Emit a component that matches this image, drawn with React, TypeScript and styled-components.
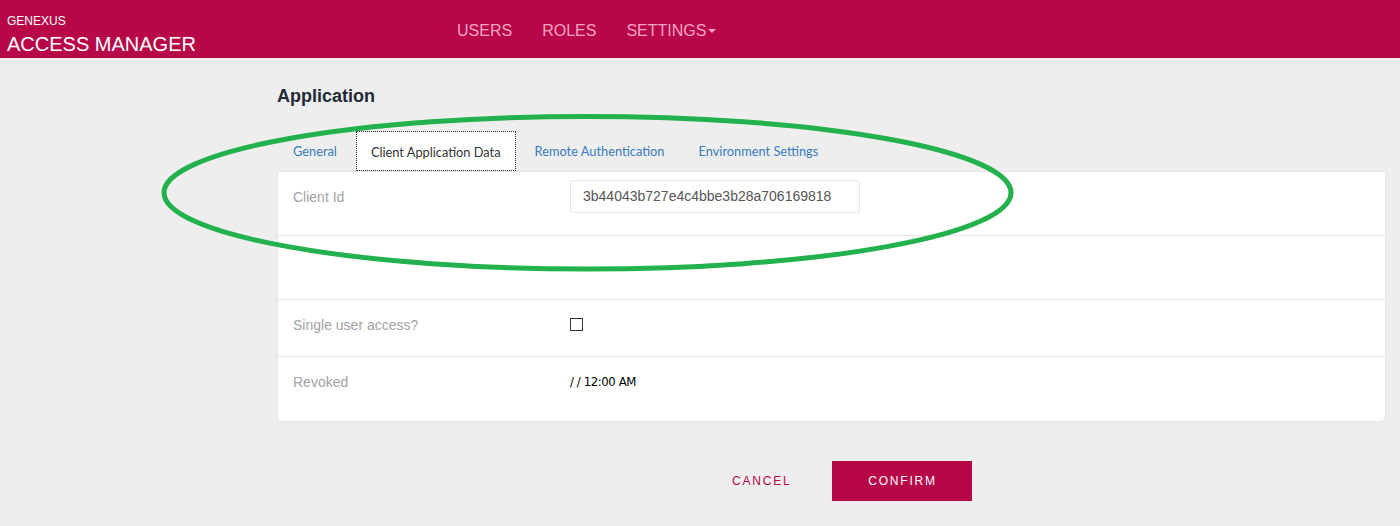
import React from "react";
import styled, { createGlobalStyle } from "styled-components";

const GlobalStyle = createGlobalStyle`
  html, body { margin: 0; padding: 0; }
  body {
    background: #eeeeee;
    font-family: "Liberation Sans", Arial, sans-serif;
    width: 1400px;
    height: 526px;
    overflow: hidden;
  }
`;

const Page = styled.div`
  position: relative;
  width: 1400px;
  height: 526px;
  background: #eeeeee;
`;

const Header = styled.header`
  height: 58px;
  background: #b80748;
  display: flex;
  align-items: flex-start;
`;

const Brand = styled.div`
  width: 457px;
  padding: 14px 0 0 7px;
  box-sizing: border-box;
  color: #ffffff;
  display: flex;
  flex-direction: column;
`;

const BrandSmall = styled.span`
  font-size: 12px;
  line-height: 14px;
`;

const BrandLarge = styled.span`
  font-size: 20px;
  line-height: 24px;
  margin-top: 4px;
`;

const Nav = styled.nav`
  display: flex;
  gap: 30px;
  padding-top: 22px;
`;

const NavItem = styled.span`
  color: #f6a3c4;
  font-size: 16px;
  line-height: 18px;
  display: flex;
  align-items: center;
`;

const Caret = styled.span`
  display: inline-block;
  width: 0;
  height: 0;
  margin-left: 2px;
  border-left: 4px solid transparent;
  border-right: 4px solid transparent;
  border-top: 4px solid #f6a3c4;
`;

const Main = styled.main`
  padding: 28px 14px 0 277px;
`;

const Title = styled.h1`
  margin: 0;
  font-size: 18px;
  line-height: 20px;
  font-weight: bold;
  color: #222a35;
`;

const Tabs = styled.div`
  display: flex;
  margin-top: 25px;
  height: 40px;
  padding-left: 1px;
`;

const Tab = styled.div<{ $active?: boolean }>`
  font-family: Lato, "Liberation Sans", sans-serif;
  font-size: 12.8px;
  line-height: 38px;
  height: 40px;
  box-sizing: border-box;
  white-space: nowrap;
  padding: 1px ${(p) => (p.$active ? "14px" : "15px")};
  color: ${(p) => (p.$active ? "#333333" : "#3a7bbf")};
  background: ${(p) => (p.$active ? "#ffffff" : "transparent")};
  border: ${(p) => (p.$active ? "1px dotted #222" : "none")};
  margin-right: 4px;
`;

const Panel = styled.div`
  background: #ffffff;
  border: 1px solid #e6e6e6;
  border-radius: 0 0 6px 6px;
  width: 1109px;
  box-sizing: border-box;
`;

const Row = styled.div<{ $h: number }>`
  display: flex;
  align-items: flex-start;
  height: ${(p) => p.$h}px;
  box-sizing: border-box;
  border-bottom: 1px solid #e6e6e6;
  &:last-child { border-bottom: none; }
`;

const Label = styled.div<{ $top: number }>`
  width: 277px;
  padding: ${(p) => p.$top}px 0 0 15px;
  font-size: 14px;
  line-height: 16px;
  color: #a3a3a3;
`;

const Value = styled.div<{ $top: number }>`
  padding-top: ${(p) => p.$top}px;
`;

const Input = styled.div`
  width: 290px;
  height: 33px;
  box-sizing: border-box;
  border: 1px solid #e6e6e6;
  border-radius: 3px;
  padding: 0 12px;
  font-size: 14px;
  line-height: 31px;
  color: #555555;
`;

const Checkbox = styled.div`
  width: 13px;
  height: 13px;
  box-sizing: border-box;
  border: 1px solid #333;
`;

const DateText = styled.span`
  font-family: "Liberation Sans Narrow", "Arial Narrow", "DejaVu Sans Condensed", sans-serif;
  font-size: 13px;
  line-height: 16px;
  color: #000;
  letter-spacing: -0.4px;
`;

const Actions = styled.div`
  display: flex;
  justify-content: flex-start;
  align-items: center;
  padding-left: 455px;
  margin-top: 39px;
  gap: 41px;
`;

const CancelButton = styled.button`
  background: none;
  border: none;
  padding: 0;
  font-family: "Liberation Sans", Arial, sans-serif;
  font-size: 12px;
  letter-spacing: 1.8px;
  color: #b80748;
`;

const ConfirmButton = styled.button`
  width: 140px;
  height: 40px;
  background: #b80748;
  border: none;
  color: #ffffff;
  font-family: "Liberation Sans", Arial, sans-serif;
  font-size: 12px;
  letter-spacing: 1.8px;
`;

const Annotation = styled.svg`
  position: absolute;
  left: 0;
  top: 0;
  width: 1400px;
  height: 526px;
  pointer-events: none;
`;

export default function App() {
  return (
    <Page>
      <GlobalStyle />
      <Header>
        <Brand>
          <BrandSmall>GENEXUS</BrandSmall>
          <BrandLarge>ACCESS MANAGER</BrandLarge>
        </Brand>
        <Nav>
          <NavItem>USERS</NavItem>
          <NavItem>ROLES</NavItem>
          <NavItem>
            SETTINGS
            <Caret />
          </NavItem>
        </Nav>
      </Header>
      <Main>
        <Title>Application</Title>
        <Tabs>
          <Tab>General</Tab>
          <Tab $active>Client Application Data</Tab>
          <Tab>Remote Authentication</Tab>
          <Tab>Environment Settings</Tab>
        </Tabs>
        <Panel>
          <Row $h={64}>
            <Label $top={17}>Client Id</Label>
            <Value $top={8}>
              <Input>3b44043b727e4c4bbe3b28a706169818</Input>
            </Value>
          </Row>
          <Row $h={64} />
          <Row $h={57}>
            <Label $top={17}>Single user access?</Label>
            <Value $top={18}>
              <Checkbox />
            </Value>
          </Row>
          <Row $h={64}>
            <Label $top={17}>Revoked</Label>
            <Value $top={15}>
              <DateText>/ / 12:00 AM</DateText>
            </Value>
          </Row>
        </Panel>
        <Actions>
          <CancelButton>CANCEL</CancelButton>
          <ConfirmButton>CONFIRM</ConfirmButton>
        </Actions>
      </Main>
      <Annotation viewBox="0 0 1400 526">
        <ellipse
          cx="587.5"
          cy="192.7"
          rx="423.5"
          ry="76.3"
          fill="none"
          stroke="#22b14c"
          strokeWidth="5"
        />
      </Annotation>
    </Page>
  );
}
